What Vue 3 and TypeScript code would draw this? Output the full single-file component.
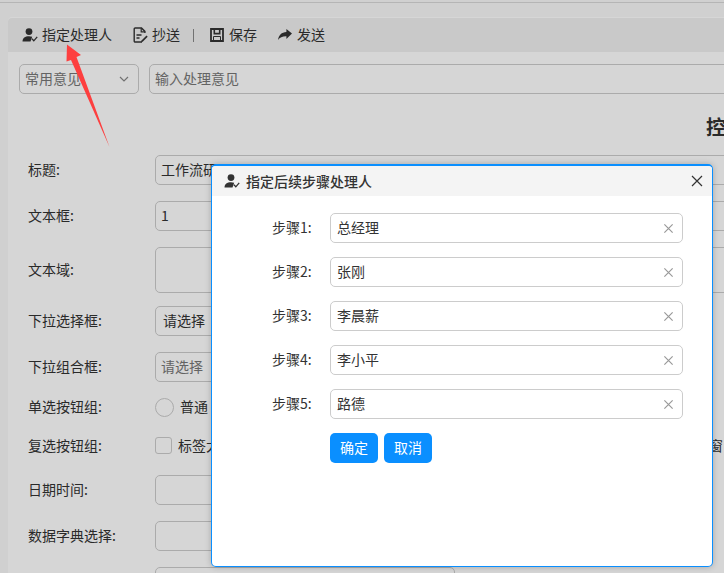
<script setup lang="ts">
interface Row { label: string; value?: string; placeholder?: string; kind: string }
const rows: Row[] = [
  { label: '标题:', value: '工作流研', kind: 'input' },
  { label: '文本框:', value: '1', kind: 'input' },
  { label: '文本域:', kind: 'area' },
  { label: '下拉选择框:', value: '请选择', kind: 'select' },
  { label: '下拉组合框:', placeholder: '请选择', kind: 'combo' },
]
const lower: string[] = ['日期时间:', '数据字典选择:']
const steps = [
  { label: '步骤1:', value: '总经理' },
  { label: '步骤2:', value: '张刚' },
  { label: '步骤3:', value: '李晨薪' },
  { label: '步骤4:', value: '李小平' },
  { label: '步骤5:', value: '路德' },
]
</script>

<template>
  <div class="page">
    <div class="topline"></div>
    <div class="panel">
      <div class="toolbar">
        <span class="tool">
          <svg class="ico" viewBox="0 0 16 16"><circle cx="7" cy="4.6" r="3.4" fill="#333"/><path d="M0.5 14.5c0-3.6 2.6-5.3 6.5-5.3 1.2 0 2.3.2 3.2.5l-1.7 4.8z" fill="#333"/><path d="M9.8 11.6l2 2.2 3.4-4" fill="none" stroke="#333" stroke-width="1.3"/></svg>
          <span class="txt">指定处理人</span>
        </span>
        <span class="tool">
          <svg class="ico" viewBox="0 0 16 16"><path d="M10 15H3.2a1 1 0 0 1-1-1V2a1 1 0 0 1 1-1h6.3l3.4 3.4V6" fill="none" stroke="#333" stroke-width="1.4"/><path d="M9.2 1.2v3.6h3.6" fill="none" stroke="#333" stroke-width="1.2"/><path d="M4.5 8h5M4.5 11h3" stroke="#333" stroke-width="1.3"/><path d="M9.5 13.6l5-5 1.2 1.2-5 5-1.6.4z" fill="#333"/></svg>
          <span class="txt">抄送</span>
        </span>
        <span class="sep"></span>
        <span class="tool">
          <svg class="ico" viewBox="0 0 16 16"><path d="M2 2h12v12H2z" fill="none" stroke="#333" stroke-width="1.8"/><path d="M5.3 2v4.600h5.400V2" fill="none" stroke="#333" stroke-width="1.600"/><path d="M4.500 9.500h7V14" fill="none" stroke="#333" stroke-width="1"/><path d="M4.500 9.500V14" stroke="#333" stroke-width="1"/></svg>
          <span class="txt">保存</span>
        </span>
        <span class="tool">
          <svg class="ico" viewBox="0 0 16 16"><path d="M15 6.6L9.4 2v2.9C4.6 5 1.6 8.2 1 13c1.8-2.7 4.600-3.800 8.400-3.700V12z" fill="#333"/></svg>
          <span class="txt">发送</span>
        </span>
      </div>

      <div class="opinion">
        <div class="box opinion-select">
          <span class="muted">常用意见</span>
          <svg class="chev" viewBox="0 0 10 6"><path d="M1 1l4 4 4-4" fill="none" stroke="#888" stroke-width="1.2"/></svg>
        </div>
        <div class="box opinion-input"><span class="muted">输入处理意见</span></div>
      </div>

      <h1 class="heading">控件示例</h1>

      <div class="form">
        <div v-for="r in rows" :key="r.label" class="row" :class="r.kind">
          <label class="label">{{ r.label }}</label>
          <div class="box field">
            <span v-if="r.value">{{ r.value }}</span>
            <span v-if="r.placeholder" class="muted">{{ r.placeholder }}</span>
          </div>
        </div>
        <div class="row choice radio-row">
          <label class="label">单选按钮组:</label>
          <span class="radio"></span><span class="opt">普通</span>
        </div>
        <div class="row choice check-row">
          <label class="label">复选按钮组:</label>
          <span class="check"></span><span class="opt">标签大</span><span class="far-opt">窗</span>
        </div>
        <div v-for="l in lower" :key="l" class="row lower">
          <label class="label">{{ l }}</label>
          <div class="box field"></div>
        </div>
        <div class="row lower">
          <label class="label"></label>
          <div class="box field"></div>
        </div>
      </div>
    </div>

    <div class="mask"></div>

    <svg class="arrow" viewBox="0 0 724 573"><path d="M67 44.500L81 55 76.500 57 109.500 147 71 60 66.500 61.500z" fill="#fd3f3f"/></svg>

    <section class="dialog">
      <header class="dlg-head">
        <svg class="ico" viewBox="0 0 16 16"><circle cx="7" cy="4.600" r="3.400" fill="#333"/><path d="M0.500 14.500c0-3.600 2.600-5.300 6.500-5.300 1.200 0 2.300.2 3.200.5l-1.700 4.800z" fill="#333"/><path d="M9.800 11.600l2 2.200 3.400-4" fill="none" stroke="#333" stroke-width="1.300"/></svg>
        <span class="dlg-title">指定后续步骤处理人</span>
        <svg class="close" viewBox="0 0 12 12"><path d="M1 1l10 10M11 1L1 11" stroke="#333" stroke-width="1.200"/></svg>
      </header>
      <div class="dlg-body">
        <div v-for="s in steps" :key="s.label" class="step">
          <label class="step-label">{{ s.label }}</label>
          <div class="step-input">
            <span class="txt">{{ s.value }}</span>
            <svg class="clear" viewBox="0 0 12 12"><path d="M1.500 1.500l9 9M10.500 1.500l-9 9" stroke="#999" stroke-width="1.300"/></svg>
          </div>
        </div>
        <div class="actions">
          <button class="btn">确定</button>
          <button class="btn">取消</button>
        </div>
      </div>
    </section>
  </div>
</template>

<style>
html, body { margin: 0; overflow: hidden; }
</style>

<style scoped>
.page {
  position: relative;
  width: 724px;
  height: 573px;
  overflow: hidden;
  background: #f8f8f8;
  font-family: "Noto Sans CJK SC", "Liberation Sans", sans-serif;
  font-size: 14px;
  color: #333;
}
.topline { height: 2px; border-bottom: 1px solid #d8d8d8; margin-bottom: 14px; }
.panel {
  width: 1400px;
  margin-left: 8px;
  padding-top: 1px;
  background: #fff;
  border-radius: 4px 4px 0 0;
  height: 600px;
}
.toolbar {
  height: 34px;
  display: flex;
  align-items: center;
  padding-left: 14px;
  background: #f0f0f0;
  border-radius: 4px 4px 0 0;
}
.tool { display: flex; align-items: center; gap: 4px; margin-right: 20px; white-space: nowrap; }
.txt { padding-bottom: 2px; }
.ico { width: 16px; height: 16px; flex: none; }
.sep { width: 1px; height: 13px; background: #888; margin: 0 15px 0 -7px; }
.opinion { display: flex; gap: 10px; padding: 12px 0 0 11px; }
.box {
  box-sizing: border-box;
  height: 30px;
  border: 1px solid #ccc;
  border-radius: 5px;
  display: flex;
  align-items: center;
  padding: 0 5px;
  background: #fff;
}
.box span { padding-bottom: 2px; }
.opinion-select { width: 120px; justify-content: space-between; padding-right: 9px; }
.opinion-input { flex: 1; }
.chev { width: 10px; height: 6px; }
.muted { color: #777; }
.heading {
  margin: 0;
  height: 61px;
  box-sizing: border-box;
  padding: 21px 0 0 698px;
  font-size: 20px;
  line-height: 24px;
  font-weight: 700;
  white-space: nowrap;
}
.form { padding-left: 20px; }
.row { display: flex; align-items: center; margin-bottom: 16px; }
.label { width: 127px; flex: none; padding-bottom: 2px; }
.field { width: 1200px; }
.row.area { margin-bottom: 13px; }
.row.area .field { height: 46px; }
.row.select .field { padding-left: 7px; width: 300px; }
.row.combo .field { width: 300px; }
.row.lower .field { width: 300px; }
.choice { height: 19px; }
.radio-row { margin-bottom: 20px; }
.radio-row .label, .radio-row .opt { padding-bottom: 4px; }
.check-row { height: 17px; margin-bottom: 21px; }
.radio {
  box-sizing: border-box;
  width: 19px;
  height: 19px;
  border: 1px solid #ccc;
  border-radius: 50%;
  background: #fff;
}
.check {
  box-sizing: border-box;
  width: 17px;
  height: 17px;
  border: 1px solid #ccc;
  border-radius: 3px;
  background: #fff;
}
.opt { margin-left: 6px; white-space: nowrap; padding-bottom: 2px; }
.far-opt { margin-left: 489px; white-space: nowrap; padding-bottom: 2px; }

.mask { position: absolute; inset: 0; background: rgba(0, 0, 0, 0.16); }
.arrow { position: absolute; left: 0; top: 0; width: 724px; height: 573px; }

.dialog {
  position: absolute;
  left: 211px;
  top: 164px;
  width: 502px;
  height: 403px;
  box-sizing: border-box;
  border: 1px solid #0a8fff;
  border-top-width: 2px;
  border-radius: 5px;
  background: #fff;
  box-shadow: 0 0 6px rgba(0, 0, 0, 0.22);
  overflow: hidden;
}
.dlg-head {
  height: 30px;
  display: flex;
  align-items: center;
  padding: 0 9px 0 12px;
  background: #f4f4f4;
}
.dlg-title { margin-left: 6px; flex: 1; font-weight: 500; }
.close { width: 12px; height: 12px; }
.dlg-body { padding-top: 17px; }
.step { display: flex; align-items: center; margin-bottom: 14px; }
.step-label { width: 118px; flex: none; box-sizing: border-box; padding: 0 0 2px 60px; white-space: nowrap; }
.step-input {
  box-sizing: border-box;
  width: 353px;
  height: 30px;
  border: 1px solid #ccc;
  border-radius: 5px;
  display: flex;
  align-items: center;
  justify-content: space-between;
  padding: 0 8px 0 6px;
}
.clear { width: 11px; height: 11px; }
.actions { display: flex; gap: 6px; padding-left: 118px; }
.btn {
  width: 48px;
  height: 30px;
  padding: 0 0 2px;
  border: 0;
  border-radius: 5px;
  background: #0a8fff;
  color: #fff;
  font: inherit;
}
</style>
